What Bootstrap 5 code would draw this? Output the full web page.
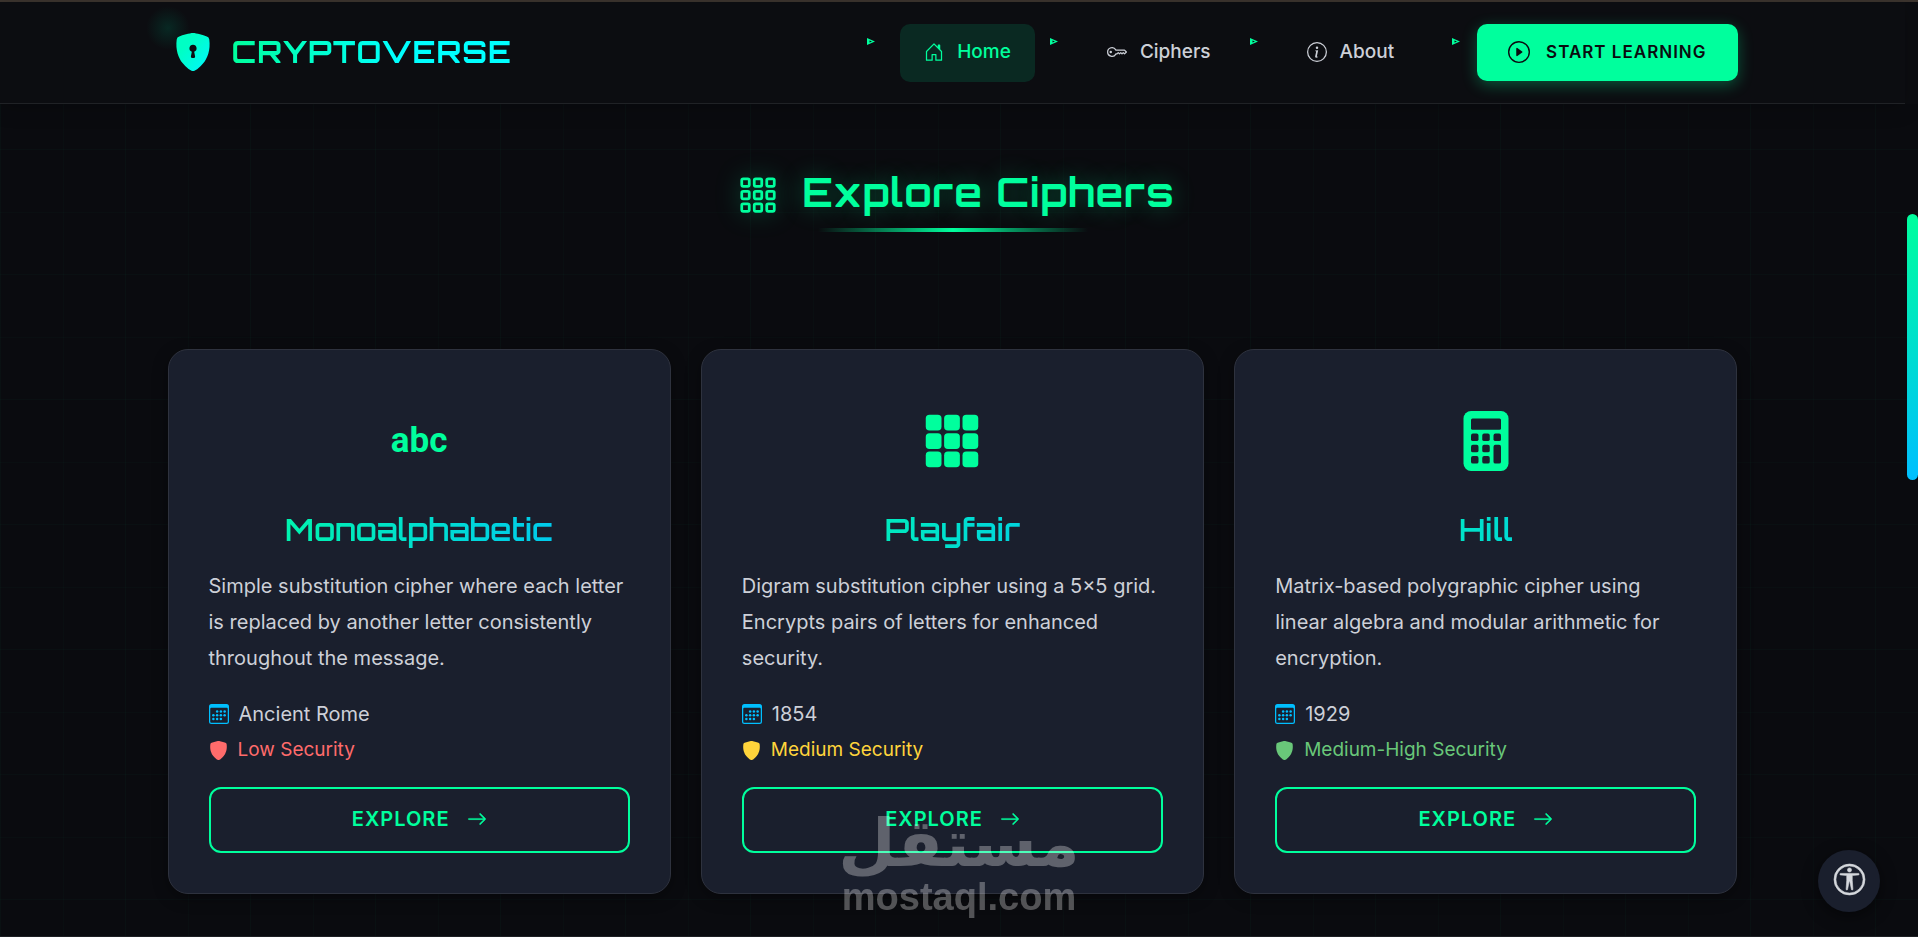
<!DOCTYPE html>
<html lang="en">
<head>
<meta charset="utf-8">
<meta name="viewport" content="width=device-width, initial-scale=1">
<title>CryptoVerse - Explore Ciphers</title>
<link href="https://cdn.jsdelivr.net/npm/bootstrap@5.3.0/dist/css/bootstrap.min.css" rel="stylesheet">
<style>
:root{--neon:#00ff9d;--cyan:#00bfff;--ink:#0a0b0f;--panel:#1a1f2d;--soft:#cdd0d8;--display:Orbitron,"DejaVu Sans",sans-serif}
body{font-family:Inter,"Liberation Sans",sans-serif;font-size:20px;line-height:30px;color:var(--soft);padding-right:13px;
  background-color:var(--ink);
  background-image:linear-gradient(90deg,rgba(0,255,157,.025) 1px,transparent 1px),linear-gradient(90deg,rgba(0,255,157,.015) 1px,transparent 1px),linear-gradient(rgba(0,255,157,.02) 1px,transparent 1px),linear-gradient(rgba(0,255,157,.015) 1px,transparent 1px);
  background-size:125px 125px;background-position:0 0,63px 0,0 24px,0 87px}
svg{fill:currentColor;flex:none}
.wrap{max-width:1600px;padding-inline:15px}
.site-head{background:#0c0d11;border-top:2px solid #3d352f;margin-right:-13px}
.site-nav{padding:22px 0 21px;border-bottom:1px solid #202226;margin-right:13px;box-shadow:0 4px 20px rgba(0,0,0,.2)}
.brand{height:56px;gap:20px;padding-left:6px;font:700 30px/40px var(--display);letter-spacing:1px;text-decoration:none;position:relative;isolation:isolate}
.brand::before{content:"";position:absolute;z-index:-1;left:-22px;top:-18px;width:44px;height:44px;border-radius:50%;background:radial-gradient(#082823,transparent 70%)}
.brand span{background:linear-gradient(90deg,var(--neon),#00ffff 60%);-webkit-background-clip:text;background-clip:text;color:transparent}
.menu{gap:15px}
.menu li{gap:25px}
.menu li:last-child{gap:17px;margin-left:19px}
.menu .tick{margin-top:14px;color:var(--neon)}
.menu .nav-link{display:flex;align-items:center;gap:13px;padding:13px 24px 15px;border-radius:10px;color:var(--soft);font-size:19px;font-weight:500}
.menu .nav-link.active{background:#0a2922;color:var(--neon)}
.btn-start{display:flex;align-items:center;gap:16px;padding:13px 31px 14px;border:0;border-radius:10px;background:var(--neon);color:var(--ink);font-size:17px;line-height:30px;font-weight:600;letter-spacing:1px;box-shadow:0 4px 15px rgba(0,255,157,.3)}
.btn-start:hover{background:var(--neon);color:var(--ink)}
.section{padding:64px 0 30px;border-bottom:1px solid #1e2024;margin-right:-13px;padding-right:13px}
.heading{gap:24px;padding-left:8px;font:700 40px/48px var(--display);letter-spacing:1px;color:var(--neon);text-shadow:0 0 25px rgba(0,255,157,.3)}
.heading svg{margin-top:6px;filter:drop-shadow(0 0 12px rgba(0,255,157,.3))}
.rule{width:270px;height:4px;margin:12px auto 117px;background:linear-gradient(90deg,transparent,var(--neon),transparent)}
.ciphers{--bs-gutter-x:30px;--bs-gutter-y:30px}
.cipher{background:var(--panel);border:1px solid #2e323e;border-radius:20px;padding:40px;color:var(--soft);box-shadow:0 4px 15px rgba(0,0,0,.35)}
.symbol{height:100px;padding-top:2px;margin-bottom:20px;color:var(--neon)}
.abc{font:700 35px/60px Roboto,sans-serif}
.cipher-title{font:600 31px/40px var(--display);margin-bottom:18px;text-align:center;background:linear-gradient(90deg,var(--neon),var(--cyan));-webkit-background-clip:text;background-clip:text;color:transparent}
.about{line-height:36px;margin-bottom:20px}
.facts{line-height:36px;margin-bottom:19px}
.facts li{display:flex;align-items:center;gap:10px}
.facts .era svg{color:var(--cyan)}
.sec-low{color:#ff6b6b}.sec-mid{color:#ffd43b}.sec-high{color:#69c779}
.level{font-size:19px}
.btn-explore{display:flex;justify-content:center;align-items:center;gap:17px;height:66px;padding:6px 12px 8px;border:2px solid var(--neon);border-radius:12px;color:var(--neon);font-size:20px;font-weight:600;letter-spacing:1px}
.btn-explore:hover{background:var(--neon);color:var(--ink)}
.scroll-thumb{position:fixed;right:0;top:22.8vh;width:11px;height:28.4vh;border-radius:6px;background:linear-gradient(var(--neon),var(--cyan))}
.access{position:fixed;right:38px;bottom:25px;width:62px;height:62px;padding-bottom:4px;border:0;border-radius:50%;background:var(--panel);color:#d5d8dd;box-shadow:0 4px 15px rgba(0,0,0,.5)}
.stamp{position:fixed;left:50%;bottom:19px;transform:translateX(-50%);pointer-events:none;text-align:center;color:#fff;opacity:.3}
.stamp-ar{font:700 66px/64px "DejaVu Sans",sans-serif}
.stamp-en{font:700 38px/42px "Liberation Sans",sans-serif}
</style>
</head>
<body class="d-flex flex-column min-vh-100">
<svg class="d-none" aria-hidden="true">
  <symbol id="i-cal" viewBox="0 0 16 16"><path d="M14 0H2a2 2 0 0 0-2 2v12a2 2 0 0 0 2 2h12a2 2 0 0 0 2-2V2a2 2 0 0 0-2-2zM1 3.857C1 3.384 1.448 3 2 3h12c.552 0 1 .384 1 .857v10.286c0 .473-.448.857-1 .857H2c-.552 0-1-.384-1-.857V3.857z"/><circle cx="6.500" cy="6" r="1"/><circle cx="9.500" cy="6" r="1"/><circle cx="12.500" cy="6" r="1"/><circle cx="3.500" cy="9" r="1"/><circle cx="6.500" cy="9" r="1"/><circle cx="9.500" cy="9" r="1"/><circle cx="12.500" cy="9" r="1"/><circle cx="3.500" cy="12" r="1"/><circle cx="6.500" cy="12" r="1"/><circle cx="9.500" cy="12" r="1"/></symbol>
  <symbol id="i-shield" viewBox="0 0 16 16"><path d="M5.072.56C6.157.265 7.31 0 8 0s1.843.265 2.928.56c1.11.3 2.229.655 2.887.87a1.54 1.54 0 0 1 1.044 1.262c.596 4.477-.787 7.795-2.465 9.99a11.775 11.775 0 0 1-2.517 2.453 7.159 7.159 0 0 1-1.048.625c-.28.132-.581.24-.829.24s-.548-.108-.829-.24a7.158 7.158 0 0 1-1.048-.625 11.777 11.777 0 0 1-2.517-2.453C1.928 10.487.545 7.169 1.141 2.692A1.54 1.54 0 0 1 2.185 1.43 62.456 62.456 0 0 1 5.072.56z"/></symbol>
  <symbol id="i-arrow" viewBox="0 0 16 16"><path stroke="currentColor" stroke-width=".3" d="M1 8a.5.5 0 0 1 .5-.5h11.793l-3.147-3.146a.5.5 0 0 1 .708-.708l4 4a.5.5 0 0 1 0 .708l-4 4a.5.5 0 0 1-.708-.708L13.293 8.500H1.500A.5.5 0 0 1 1 8z"/></symbol>
  <symbol id="i-tick" viewBox="0 0 8 7"><path fill-rule="evenodd" d="M0 0v7L8 3.500zM2.500 2.500v2L5 3.500z"/></symbol>
</svg>

<header class="site-head">
  <nav class="site-nav" aria-label="Main">
    <div class="wrap container-fluid d-flex justify-content-between align-items-start">
      <a class="brand d-flex align-items-center" href="#">
        <svg width="38" height="38" viewBox="0 0 16 16" aria-hidden="true"><defs><linearGradient id="g" x1="0" y1="0" x2="1" y2="1"><stop offset="0.300" stop-color="#00ffc4"/><stop offset="1" stop-color="#00f6ff"/></linearGradient></defs><path fill="url(#g)" d="M8 0c-.69 0-1.843.265-2.928.56-1.11.3-2.229.655-2.887.87a1.54 1.54 0 0 0-1.044 1.262c-.596 4.477.787 7.795 2.465 9.99a11.777 11.777 0 0 0 2.517 2.453c.386.273.744.482 1.048.625.28.132.581.24.829.24s.548-.108.829-.24a7.159 7.159 0 0 0 1.048-.625 11.775 11.775 0 0 0 2.517-2.453c1.678-2.195 3.061-5.513 2.465-9.99a1.541 1.541 0 0 0-1.044-1.263 62.467 62.467 0 0 0-2.887-.87C9.843.266 8.69 0 8 0zm0 5a1.5 1.5 0 0 1 .5 2.915l.385 1.99a.5.5 0 0 1-.491.595h-.788a.5.5 0 0 1-.49-.595l.384-1.99A1.5 1.5 0 0 1 8 5z"/></svg>
        <span>CRYPTOVERSE</span>
      </a>
      <ul class="menu list-unstyled d-flex mb-0">
        <li class="d-flex align-items-start"><svg class="tick" width="8" height="7"><use href="#i-tick"/></svg>
          <a class="nav-link active" aria-current="page" href="#"><svg width="20" height="20" viewBox="0 0 16 16"><path d="M8.354 1.146a.5.5 0 0 0-.708 0l-6 6A.5.5 0 0 0 1.500 7.500v7a.5.5 0 0 0 .5.5h4.500a.5.5 0 0 0 .5-.5v-4h2v4a.5.5 0 0 0 .5.5H14a.5.5 0 0 0 .5-.5v-7a.5.5 0 0 0-.146-.354L13 5.793V2.500a.5.5 0 0 0-.5-.5h-1a.5.5 0 0 0-.5.5v1.293L8.354 1.146zM2.500 14V7.707l5.500-5.500 5.500 5.500V14H10v-4a.5.5 0 0 0-.5-.5h-3a.5.5 0 0 0-.5.5v4H2.500z"/></svg>Home</a></li>
        <li class="d-flex align-items-start"><svg class="tick" width="8" height="7"><use href="#i-tick"/></svg>
          <a class="nav-link" href="#ciphers"><svg width="20" height="20" viewBox="0 0 16 16"><path d="M0 8a4 4 0 0 1 7.465-2H14a.5.5 0 0 1 .354.146l1.500 1.500a.5.5 0 0 1 0 .708l-1.500 1.500a.5.5 0 0 1-.708 0L13 9.207l-.646.647a.5.5 0 0 1-.708 0L11 9.207l-.646.647a.5.5 0 0 1-.708 0L9 9.207l-.646.647A.5.5 0 0 1 8 10h-.535A4 4 0 0 1 0 8zm4-3a3 3 0 1 0 2.712 4.285A.5.5 0 0 1 7.163 9h.63l.853-.854a.5.5 0 0 1 .708 0l.646.647.646-.647a.5.5 0 0 1 .708 0l.646.647.646-.647a.5.5 0 0 1 .708 0l.646.647.793-.793-1-1h-6.630a.5.5 0 0 1-.451-.285A3 3 0 0 0 4 5z"/><circle cx="3" cy="8" r="1"/></svg>Ciphers</a></li>
        <li class="d-flex align-items-start"><svg class="tick" width="8" height="7"><use href="#i-tick"/></svg>
          <a class="nav-link" href="#about"><svg width="20" height="20" viewBox="0 0 16 16"><path d="M8 15A7 7 0 1 1 8 1a7 7 0 0 1 0 14zm0 1A8 8 0 1 0 8 0a8 8 0 0 0 0 16z"/><path d="m8.930 6.588-2.290.287-.082.38.45.083c.294.07.352.176.288.469l-.738 3.468c-.194.897.105 1.319.808 1.319.545 0 1.178-.252 1.465-.598l.088-.416c-.2.176-.492.246-.686.246-.275 0-.375-.193-.304-.533L8.930 6.588zM9 4.500a1 1 0 1 1-2 0 1 1 0 0 1 2 0z"/></svg>About</a></li>
        <li class="d-flex align-items-start"><svg class="tick" width="8" height="7"><use href="#i-tick"/></svg>
          <button type="button" class="btn btn-start"><svg width="22" height="22" viewBox="0 0 16 16"><path d="M8 15A7 7 0 1 1 8 1a7 7 0 0 1 0 14zm0 1A8 8 0 1 0 8 0a8 8 0 0 0 0 16z"/><path d="M6.271 5.055a.5.5 0 0 1 .52.038l3.500 2.500a.5.5 0 0 1 0 .814l-3.500 2.500A.5.5 0 0 1 6 10.500v-5a.5.5 0 0 1 .271-.445z"/></svg>START LEARNING</button></li>
      </ul>
    </div>
  </nav>
</header>

<main class="section flex-grow-1" id="ciphers">
  <div class="wrap container-fluid">
    <h2 class="heading d-flex justify-content-center align-items-center mb-0">
      <svg width="40" height="40" viewBox="0 0 16 16" aria-hidden="true"><g fill="none" stroke="currentColor" stroke-width="1.100"><rect x="1.500" y="1.500" width="3" height="3" rx=".6"/><rect x="6.500" y="1.500" width="3" height="3" rx=".6"/><rect x="11.500" y="1.500" width="3" height="3" rx=".6"/><rect x="1.500" y="6.500" width="3" height="3" rx=".6"/><rect x="6.500" y="6.500" width="3" height="3" rx=".6"/><rect x="11.500" y="6.500" width="3" height="3" rx=".6"/><rect x="1.500" y="11.500" width="3" height="3" rx=".6"/><rect x="6.500" y="11.500" width="3" height="3" rx=".6"/><rect x="11.500" y="11.500" width="3" height="3" rx=".6"/></g></svg>
      Explore Ciphers
    </h2>
    <div class="rule"></div>

    <div class="row ciphers">
      <div class="col-12 col-lg-4">
        <article class="cipher">
          <div class="symbol d-flex justify-content-center align-items-center"><span class="abc">abc</span></div>
          <h3 class="cipher-title">Monoalphabetic</h3>
          <p class="about">Simple substitution cipher where each letter is replaced by another letter consistently throughout the message.</p>
          <ul class="facts list-unstyled">
            <li class="era"><svg width="20" height="20"><use href="#i-cal"/></svg>Ancient Rome</li>
            <li class="level sec-low"><svg width="19" height="19"><use href="#i-shield"/></svg>Low Security</li>
          </ul>
          <a class="btn btn-explore" href="#monoalphabetic">EXPLORE <svg width="20" height="20"><use href="#i-arrow"/></svg></a>
        </article>
      </div>
      <div class="col-12 col-lg-4">
        <article class="cipher">
          <div class="symbol d-flex justify-content-center align-items-center"><svg width="60" height="60" viewBox="0 0 16 16"><rect x="1" y="1" width="4.200" height="4.200" rx="1"/><rect x="5.900" y="1" width="4.200" height="4.200" rx="1"/><rect x="10.800" y="1" width="4.200" height="4.200" rx="1"/><rect x="1" y="5.900" width="4.200" height="4.200" rx="1"/><rect x="5.900" y="5.900" width="4.200" height="4.200" rx="1"/><rect x="10.800" y="5.900" width="4.200" height="4.200" rx="1"/><rect x="1" y="10.800" width="4.200" height="4.200" rx="1"/><rect x="5.900" y="10.800" width="4.200" height="4.200" rx="1"/><rect x="10.800" y="10.800" width="4.200" height="4.200" rx="1"/></svg></div>
          <h3 class="cipher-title">Playfair</h3>
          <p class="about">Digram substitution cipher using a 5×5 grid. Encrypts pairs of letters for enhanced security.</p>
          <ul class="facts list-unstyled">
            <li class="era"><svg width="20" height="20"><use href="#i-cal"/></svg>1854</li>
            <li class="level sec-mid"><svg width="19" height="19"><use href="#i-shield"/></svg>Medium Security</li>
          </ul>
          <a class="btn btn-explore" href="#playfair">EXPLORE <svg width="20" height="20"><use href="#i-arrow"/></svg></a>
        </article>
      </div>
      <div class="col-12 col-lg-4">
        <article class="cipher">
          <div class="symbol d-flex justify-content-center align-items-center"><svg width="60" height="60" viewBox="0 0 16 16"><rect x="2" y="0" width="12" height="16" rx="2"/><g fill="#1a1f2d"><rect x="4" y="2" width="8" height="3" rx=".4"/><rect x="4" y="6" width="2" height="2" rx=".5"/><rect x="7" y="6" width="2" height="2" rx=".5"/><rect x="10" y="6" width="2" height="2" rx=".5"/><rect x="4" y="9" width="2" height="2" rx=".5"/><rect x="7" y="9" width="2" height="2" rx=".5"/><rect x="4" y="12" width="2" height="2" rx=".5"/><rect x="7" y="12" width="2" height="2" rx=".5"/><rect x="10" y="9" width="2" height="5" rx=".5"/></g></svg></div>
          <h3 class="cipher-title">Hill</h3>
          <p class="about">Matrix-based polygraphic cipher using linear algebra and modular arithmetic for encryption.</p>
          <ul class="facts list-unstyled">
            <li class="era"><svg width="20" height="20"><use href="#i-cal"/></svg>1929</li>
            <li class="level sec-high"><svg width="19" height="19"><use href="#i-shield"/></svg>Medium-High Security</li>
          </ul>
          <a class="btn btn-explore" href="#hill">EXPLORE <svg width="20" height="20"><use href="#i-arrow"/></svg></a>
        </article>
      </div>
    </div>
  </div>
</main>

<div class="stamp"><div class="stamp-ar" lang="ar" dir="rtl">مستقل</div><div class="stamp-en">mostaql.com</div></div>
<div class="scroll-thumb"></div>
<button type="button" class="access d-flex justify-content-center align-items-center" aria-label="Accessibility"><svg width="31" height="31" viewBox="0 0 16 16" stroke="currentColor" stroke-width=".3" overflow="visible"><path d="M8 4.143A1.071 1.071 0 1 0 8 2a1.071 1.071 0 0 0 0 2.143Zm-4.668 1.470 3.240.316v2.500l-.323 4.585A.383.383 0 0 0 7 13.140l.826-4.017c.045-.18.301-.18.346 0L9 13.139a.383.383 0 0 0 .752-.125L9.430 8.430v-2.500l3.239-.316a.38.38 0 0 0-.047-.756H3.379a.38.38 0 0 0-.047.756Z"/><path d="M8 0a8 8 0 1 0 0 16A8 8 0 0 0 8 0ZM1 8a7 7 0 1 1 14 0A7 7 0 0 1 1 8Z"/></svg></button>
<script src="https://cdn.jsdelivr.net/npm/bootstrap@5.3.0/dist/js/bootstrap.bundle.min.js"></script>
</body>
</html>
